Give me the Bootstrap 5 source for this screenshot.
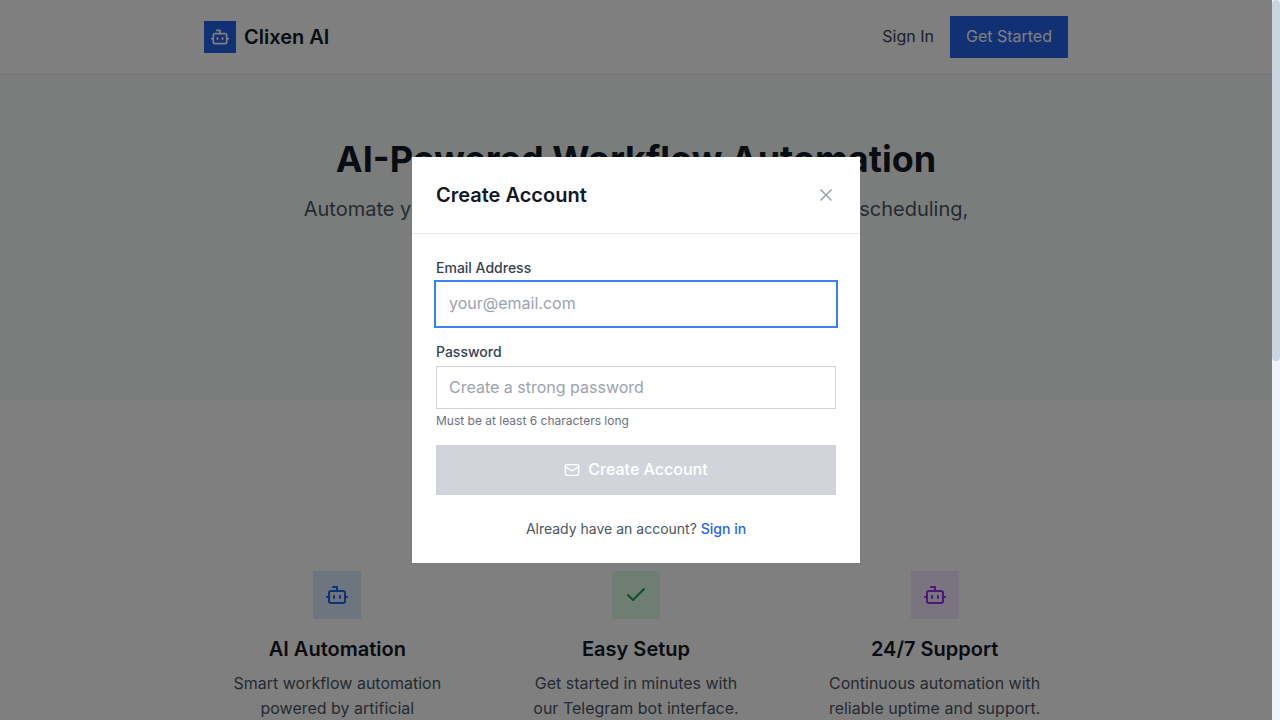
<!DOCTYPE html>
<html lang="en">
<head>
<meta charset="utf-8">
<meta name="viewport" content="width=device-width, initial-scale=1">
<title>Clixen AI</title>
<link href="https://cdn.jsdelivr.net/npm/bootstrap@5.3.0/dist/css/bootstrap.min.css" rel="stylesheet">
<style>
  html, body { height: 100%; overflow: hidden; }
  body { font-family: Inter, "Liberation Sans", sans-serif; line-height: 1.6; color: #111827; background: #fff; }
  .page { margin-right: 8px; height: 100%; overflow: hidden; }
  .wrap { max-width: 896px; }
  .line-b { border-bottom: 1px solid #e5e7eb; }
  svg { fill: none; stroke: currentColor; stroke-width: 2; stroke-linecap: round; stroke-linejoin: round; display: block; flex-shrink: 0; }
  .logo { width: 32px; height: 32px; background: #2563eb; }
  .title-xl { font-size: 20px; line-height: 28px; font-weight: 600; margin: 0; }
  .btn-start { padding: 8px 16px; font-weight: 400; line-height: 1.6; background: #2563eb; color: #fff; border: 0; border-radius: 0; }
  .txt-700 { color: #374151; }
  .txt-600 { color: #4b5563; }
  .hero { background: #f7fbf8; height: 325px; padding-top: 64px; }
  .hero h1 { font-size: 36px; line-height: 40px; font-weight: 700; margin-bottom: 16px; }
  .hero p { font-size: 20px; line-height: 28px; max-width: 672px; }
  .tight { word-spacing: -.8px; }
  .features { padding-top: 147px; }
  .feature-grid { display: grid; grid-template-columns: repeat(3, 1fr); gap: 32px; }
  .feature { padding: 24px; }
  .tile { width: 48px; height: 48px; margin-bottom: 16px; }
  .tile-blue { background: #dbeafe; color: #2563eb; }
  .tile-green { background: #dcfce7; color: #16a34a; }
  .tile-purple { background: #f3e8ff; color: #9333ea; }
  .overlay { right: 8px; background: rgba(0,0,0,.5); z-index: 50; }
  .dialog { width: 448px; background: #fff; }
  .field-label { display: block; font-size: 14px; line-height: 20px; font-weight: 500; margin-bottom: 4px; color: #374151; }
  .field, .field:focus { display: block; padding: 7px 12px 9px; line-height: 25.6px; height: 43.6px; border: 1px solid #d1d5db; border-radius: 0; box-shadow: none; color: #111827; }
  .field::placeholder { color: #9ca3af; }
  .field-active, .field-active:focus { box-shadow: 0 0 0 2px #3b82f6; border: 1px solid #fff; }
  .hint { font-size: 12px; line-height: 16px; color: #6b7280; margin-top: 4px; }
  .btn-submit { padding: 12px 16px; font-weight: 500; line-height: 1.6; background: #d1d5db; color: #fff; border: 0; }
  .foot { font-size: 14px; line-height: 20px; margin-top: 24px; }
  .foot a { color: #2563eb; font-weight: 500; text-decoration: none; }
  .scroll-track { width: 8px; background: #f1f5f9; z-index: 60; }
  .scroll-thumb { height: 361px; background: #cbd5e1; border-radius: 4px; }
</style>
</head>
<body>
<svg width="0" height="0" class="position-absolute">
  <symbol id="bot" viewBox="0 0 24 24"><path d="M12 8V4H8"/><rect width="16" height="12" x="4" y="8" rx="2"/><path d="M2 14h2M20 14h2M15 13v2M9 13v2"/></symbol>
</svg>
<div class="page">
  <header class="bg-white line-b">
    <div class="wrap mx-auto p-3 d-flex justify-content-between align-items-center">
      <div class="d-flex align-items-center gap-2">
        <div class="logo d-flex align-items-center justify-content-center text-white"><svg width="20" height="20"><use href="#bot"/></svg></div>
        <span class="title-xl">Clixen AI</span>
      </div>
      <div class="d-flex align-items-center gap-3">
        <a href="#" class="txt-700 text-decoration-none">Sign In</a>
        <button class="btn-start">Get Started</button>
      </div>
    </div>
  </header>
  <section class="hero text-center">
    <div class="wrap mx-auto px-3">
      <h1>AI-Powered Workflow Automation</h1>
      <p class="txt-600 mx-auto mb-0">Automate your <span class="tight">daily tasks with AI assistants for your </span>email, scheduling,<br>and more.</p>
    </div>
  </section>
  <section class="features bg-white">
    <div class="wrap mx-auto px-3">
      <div class="feature-grid text-center">
        <div class="feature">
          <div class="tile tile-blue mx-auto d-flex align-items-center justify-content-center"><svg width="24" height="24"><use href="#bot"/></svg></div>
          <h3 class="title-xl mb-2">AI Automation</h3>
          <p class="txt-600">Smart workflow automation powered by artificial</p>
        </div>
        <div class="feature">
          <div class="tile tile-green mx-auto d-flex align-items-center justify-content-center"><svg width="24" height="24" viewBox="0 0 24 24"><path d="M20 6 9 17l-5-5"/></svg></div>
          <h3 class="title-xl mb-2">Easy Setup</h3>
          <p class="txt-600">Get started in minutes with our Telegram bot interface.</p>
        </div>
        <div class="feature">
          <div class="tile tile-purple mx-auto d-flex align-items-center justify-content-center"><svg width="24" height="24"><use href="#bot"/></svg></div>
          <h3 class="title-xl mb-2">24/7 Support</h3>
          <p class="txt-600">Continuous automation with reliable uptime and support.</p>
        </div>
      </div>
    </div>
  </section>
</div>

<div class="overlay position-fixed top-0 bottom-0 start-0 d-flex align-items-center justify-content-center">
  <div class="dialog" role="dialog" aria-label="Create Account">
    <div class="line-b p-4 d-flex justify-content-between align-items-center">
      <h2 class="title-xl">Create Account</h2>
      <svg width="20" height="20" viewBox="0 0 24 24" color="#9ca3af"><path d="M18 6 6 18M6 6l12 12"/></svg>
    </div>
    <div class="p-4">
      <form>
        <div class="mb-3">
          <label class="field-label" for="email">Email Address</label>
          <input id="email" type="email" class="form-control field field-active" placeholder="your@email.com">
        </div>
        <div class="mb-3">
          <label class="field-label" for="pw">Password</label>
          <input id="pw" type="password" class="form-control field" placeholder="Create a strong password">
          <p class="hint mb-0">Must be at least 6 characters long</p>
        </div>
        <button type="button" class="btn-submit w-100 d-flex align-items-center justify-content-center gap-2">
          <svg width="16" height="16" viewBox="0 0 24 24"><rect width="20" height="16" x="2" y="4" rx="2"/><path d="m22 7-8.97 5.7a1.94 1.94 0 0 1-2.06 0L2 7"/></svg>
          <span>Create Account</span>
        </button>
      </form>
      <p class="foot txt-600 text-center mb-0">Already have an account? <a href="#">Sign in</a></p>
    </div>
  </div>
</div>
<div class="scroll-track position-fixed top-0 bottom-0 end-0"><div class="scroll-thumb"></div></div>
<script src="https://cdn.jsdelivr.net/npm/bootstrap@5.3.0/dist/js/bootstrap.bundle.min.js"></script>
</body>
</html>
